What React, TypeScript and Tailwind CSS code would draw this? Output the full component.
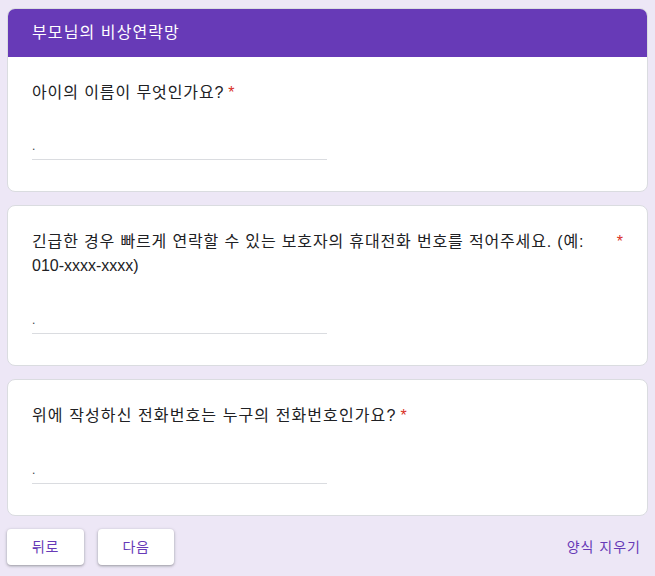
import React from "react";

const font = { fontFamily: "'Liberation Sans', 'Noto Sans CJK KR', sans-serif" };

function Input() {
  return (
    <div className="flex h-8 w-[295px] items-end border-b border-[#dadce0] pb-[5px] text-[12px] leading-4 text-[#3c4043]">
      .
    </div>
  );
}

function Question({ children, track }: { children: React.ReactNode; track: string }) {
  return (
    <div className="rounded-lg border border-[#dadce0] bg-white px-6 pt-6 pb-[31px]">
      <div className="mb-6 flex text-[16px] leading-6 text-[#202124]">
        <span className={track}>{children}</span>
        <span className="pl-1 text-[#d93025]">*</span>
      </div>
      <Input />
    </div>
  );
}

export default function App() {
  return (
    <div className="min-h-[576px] bg-[#ede7f6] pt-2" style={font}>
      <div className="mx-auto flex w-[641px] flex-col gap-[13px]">
        <div className="overflow-hidden rounded-lg border border-[#dadce0] bg-white">
          <div className="flex h-12 items-center bg-[#673ab7] px-6 text-[16px] tracking-[1.1px] text-white">
            부모님의 비상연락망
          </div>
          <div className="px-6 pt-6 pb-[31px]">
            <div className="mb-[23px] flex text-[16px] leading-6 text-[#202124]">
              <span className="tracking-[0.9px]">아이의 이름이 무엇인가요?</span>
              <span className="pl-1 text-[#d93025]">*</span>
            </div>
            <Input />
          </div>
        </div>
        <Question track="">
          <span className="tracking-[0.85px]">
            긴급한 경우 빠르게 연락할 수 있는 보호자의 휴대전화 번호를 적어주세요. (예:
          </span>{" "}
          <span className="whitespace-nowrap">010-xxxx-xxxx)</span>
        </Question>
        <Question track="tracking-[1.1px]">위에 작성하신 전화번호는 누구의 전화번호인가요?</Question>
        <div className="flex items-center justify-between">
          <div className="flex gap-[14px]">
            <button className="h-9 w-[77px] rounded bg-white text-[14px] tracking-[0.5px] text-[#673ab7] shadow-[0_1px_2px_0_rgba(60,64,67,0.3),0_1px_3px_1px_rgba(60,64,67,0.15)]">
              뒤로
            </button>
            <button className="h-9 w-[76px] rounded bg-white text-[14px] tracking-[0.5px] text-[#673ab7] shadow-[0_1px_2px_0_rgba(60,64,67,0.3),0_1px_3px_1px_rgba(60,64,67,0.15)]">
              다음
            </button>
          </div>
          <button className="pr-[7px] text-[14px] tracking-[1px] text-[#673ab7]">양식 지우기</button>
        </div>
      </div>
    </div>
  );
}
